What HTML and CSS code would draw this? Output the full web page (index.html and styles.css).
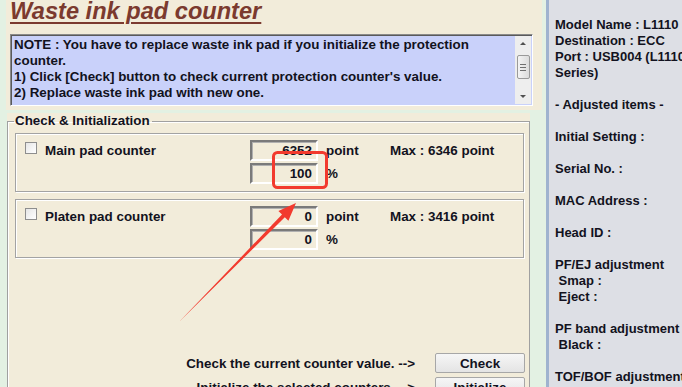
FILE: index.html
```html
<!DOCTYPE html>
<html>

<head>
    <meta charset="UTF-8">
    <title>Waste ink pad counter</title>
    <link rel="stylesheet" href="styles.css">
</head>

<body>
    <div class="screen">
        <div class="left">
            <div class="head">
                <h1 class="title">Waste ink pad counter</h1>
                <div class="note">
                    <div class="note_txt">
                        NOTE : You have to replace waste ink pad if you initialize the protection<br/>
                        counter.<br/>
                        1) Click [Check] button to check current protection counter's value.<br/>
                        2) Replace waste ink pad with new one.
                    </div>
                    <div class="scroll">
                        <span class="arrow up"></span>
                        <span class="thumb"><i></i><i></i><i></i></span>
                        <span class="arrow down"></span>
                    </div>
                </div>
            </div>
            <div class="panel">
                <fieldset class="group">
                    <legend>Check &amp; Initialization</legend>
                    <!--主废墨垫-->
                    <div class="counter">
                        <div class="name"><span class="box"></span>Main pad counter</div>
                        <div class="field">6352</div>
                        <div class="unit">point</div>
                        <div class="max">Max : 6346 point</div>
                        <div></div>
                        <div class="field">100</div>
                        <div class="unit">%</div>
                    </div>
                    <!--压板废墨垫-->
                    <div class="counter">
                        <div class="name"><span class="box"></span>Platen pad counter</div>
                        <div class="field">0</div>
                        <div class="unit">point</div>
                        <div class="max">Max : 3416 point</div>
                        <div></div>
                        <div class="field">0</div>
                        <div class="unit">%</div>
                    </div>
                    <div class="actions">
                        <div class="act_row">
                            <span>Check the current counter value. --&gt;</span>
                            <button class="btn">Check</button>
                        </div>
                        <div class="act_row">
                            <span>Initialize the selected counters. --&gt;</span>
                            <button class="btn">Initialize</button>
                        </div>
                    </div>
                </fieldset>
            </div>
        </div>
        <div class="info">Model Name : L1110
Destination : ECC
Port : USB004 (L1110
Series)

- Adjusted items -

Initial Setting :

Serial No. :

MAC Address :

Head ID :

PF/EJ adjustment
 Smap :
 Eject :

PF band adjustment
 Black :

TOF/BOF adjustment</div>
        <!--标注-->
        <svg class="mark" width="682" height="387" viewBox="0 0 682 387">
            <rect x="273.5" y="152.5" width="53" height="35" rx="4" fill="none" stroke="#f23a2e" stroke-width="3"/>
            <polygon points="179,322 282,214.4 278.4,210.9 296,203 288.4,220.7 284.8,217.2" fill="#f23a2e"/>
        </svg>
    </div>
</body>

</html>
```

FILE: styles.css
```css
body {
    margin: 0;
    background-color: #e3f1e3;
    font-family: "Liberation Sans", Arial, sans-serif;
    font-size: 13.4px;
    font-weight: bold;
    color: #121220;
}

.screen {
    position: relative;
    display: flex;
    width: 682px;
    height: 387px;
    overflow: hidden;
}

.left {
    width: 546px;
    flex-shrink: 0;
}

.head {
    margin-left: 6px;
    width: 536px;
    height: 110px;
    background-color: #f2ecda;
}

.title {
    margin: 0;
    padding-left: 4px;
    font-size: 23.6px;
    line-height: 23px;
    font-style: italic;
    font-weight: bold;
    color: #7b3a2f;
    text-decoration: underline;
    text-decoration-thickness: 2px;
    text-underline-offset: 3px;
}

.note {
    display: flex;
    margin: 11px 0 0 4px;
    width: 523px;
    height: 72px;
    box-sizing: border-box;
    background-color: #c9d1fa;
    border: 1px solid;
    border-color: #8a8a8a #ffffff #ffffff #8a8a8a;
    box-shadow: inset 1px 1px 0 #5a5a5a;
}

.note_txt {
    flex: 1;
    padding: 2px 0 0 3px;
    line-height: 16px;
    white-space: nowrap;
}

.scroll {
    display: flex;
    flex-direction: column;
    align-items: center;
    width: 16px;
    margin: 1px 1px 1px 0;
    background-color: #eeeeee;
}

.arrow {
    width: 0;
    height: 0;
    border-left: 3px solid transparent;
    border-right: 3px solid transparent;
}

.arrow.up {
    margin-top: 6px;
    border-bottom: 3px solid #505050;
}

.arrow.down {
    margin-top: auto;
    margin-bottom: 6px;
    border-top: 3px solid #505050;
}

.thumb {
    display: flex;
    flex-direction: column;
    align-items: center;
    justify-content: center;
    gap: 2px;
    margin-top: 10px;
    width: 13px;
    height: 24px;
    box-sizing: border-box;
    border: 1px solid #9a9a9a;
    border-radius: 2px;
    background: linear-gradient(to right, #f4f4f4, #dcdcdc);
}

.thumb i {
    display: block;
    width: 6px;
    height: 1px;
    background-color: #707070;
}

.panel {
    margin-left: 7px;
    width: 523px;
    height: 277px;
    background-color: #f2ecda;
}

.group {
    margin: 3px 0 0 0;
    padding: 4px 5px 0 7px;
    height: 290px;
    border: 1px solid #a0a0a0;
    border-bottom: none;
    box-shadow: inset 1px 1px 0 #ffffff;
}

.group legend {
    margin-left: -1px;
    padding: 0 2px 0 1px;
    line-height: 16px;
}

.counter {
    display: grid;
    grid-template-columns: 225px 68px 72px auto;
    grid-template-rows: 21px 21px;
    row-gap: 2px;
    align-items: center;
    height: 59px;
    box-sizing: border-box;
    padding: 6px 0 0 9px;
    margin-bottom: 7px;
    border: 1px solid #a3a3a3;
    box-shadow: inset 1px 1px 0 #ffffff, 1px 1px 0 #ffffff;
}

.name {
    display: flex;
    align-items: center;
}

.box {
    width: 12px;
    height: 12px;
    box-sizing: border-box;
    margin: -5px 8px 0 0;
    border: 1px solid #8e8e8e;
    background: linear-gradient(135deg, #e6e6e6, #ffffff);
}

.field {
    height: 21px;
    box-sizing: border-box;
    padding-right: 4px;
    text-align: right;
    line-height: 17px;
    border: 2px solid;
    border-color: #7a7a7a #ffffff #ffffff #7a7a7a;
    box-shadow: inset 1px 1px 0 #b0b0b0;
}

.unit {
    padding-left: 8px;
}

.actions {
    margin-top: 95px;
    display: flex;
    flex-direction: column;
    gap: 4px;
}

.act_row {
    display: flex;
    justify-content: flex-end;
    align-items: center;
    gap: 20px;
    margin-right: -1px;
}

.btn {
    width: 90px;
    height: 20px;
    padding: 0;
    font-family: inherit;
    font-size: 13.4px;
    font-weight: bold;
    color: #121220;
    border: 1px solid #a7a7a7;
    border-radius: 2px;
    background: linear-gradient(#f6f6f6, #e4e4e4);
}

.info {
    flex: 1;
    border-left: 3px solid #9fb3cf;
    background-color: #dddfe5;
    padding: 17px 0 0 6px;
    font-size: 13px;
    line-height: 16px;
    white-space: pre;
    overflow: hidden;
}

.mark {
    position: absolute;
    left: 0;
    top: 0;
    pointer-events: none;
}
```
